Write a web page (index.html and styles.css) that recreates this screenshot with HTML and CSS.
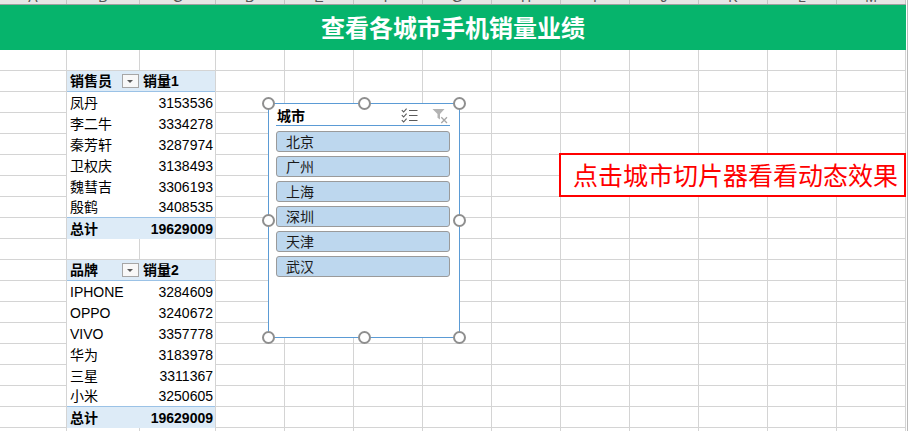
FILE: index.html
```html
<!DOCTYPE html>
<html lang="zh-CN">
<head>
<meta charset="utf-8">
<title>查看各城市手机销量业绩</title>
<link rel="stylesheet" href="styles.css">
</head>
<body>
<div class="page">
  <div class="colhead">
    <div class="ch a"><span>A</span></div>
    <div class="ch b"><span>B</span></div>
    <div class="ch c"><span>C</span></div>
    <div class="ch"><span>D</span></div>
    <div class="ch"><span>E</span></div>
    <div class="ch"><span>F</span></div>
    <div class="ch"><span>G</span></div>
    <div class="ch"><span>H</span></div>
    <div class="ch"><span>I</span></div>
    <div class="ch"><span>J</span></div>
    <div class="ch"><span>K</span></div>
    <div class="ch"><span>L</span></div>
    <div class="ch"><span>M</span></div>
  </div>
  <div class="title">查看各城市手机销量业绩</div>
  <div class="sheet">
    <div class="pivot">
      <div class="prow phead">
        <div class="c1">销售员<span class="dd"></span></div>
        <div class="c2h">销量1</div>
      </div>
      <div class="prow"><div class="c1">凤丹</div><div class="c2">3153536</div></div>
      <div class="prow"><div class="c1">李二牛</div><div class="c2">3334278</div></div>
      <div class="prow"><div class="c1">秦芳轩</div><div class="c2">3287974</div></div>
      <div class="prow"><div class="c1">卫权庆</div><div class="c2">3138493</div></div>
      <div class="prow"><div class="c1">魏彗吉</div><div class="c2">3306193</div></div>
      <div class="prow plast"><div class="c1">殷鹤</div><div class="c2">3408535</div></div>
      <div class="prow ptotal"><div class="c1">总计</div><div class="c2">19629009</div></div>
    </div>
    <div class="pivot">
      <div class="prow phead">
        <div class="c1">品牌<span class="dd"></span></div>
        <div class="c2h">销量2</div>
      </div>
      <div class="prow"><div class="c1">IPHONE</div><div class="c2">3284609</div></div>
      <div class="prow"><div class="c1">OPPO</div><div class="c2">3240672</div></div>
      <div class="prow"><div class="c1">VIVO</div><div class="c2">3357778</div></div>
      <div class="prow"><div class="c1">华为</div><div class="c2">3183978</div></div>
      <div class="prow"><div class="c1">三星</div><div class="c2">3311367</div></div>
      <div class="prow plast"><div class="c1">小米</div><div class="c2">3250605</div></div>
      <div class="prow ptotal"><div class="c1">总计</div><div class="c2">19629009</div></div>
    </div>

    <div class="slicer">
      <div class="s-head">
        <span class="s-title">城市</span>
        <svg class="ic-multi" width="17" height="15" viewBox="0 0 17 15">
          <g fill="none" stroke="#5a5a5a" stroke-width="1.1">
            <path d="M0.8 2.2 L2.6 4 L5.6 0.6"/>
            <path d="M0.8 7.2 L2.6 9 L5.6 5.6"/>
            <path d="M0.8 12.2 L2.6 14 L5.6 10.6"/>
            <path d="M8 2.5 H16.5 M8 7.5 H16.5 M8 12.5 H16.5"/>
          </g>
        </svg>
        <svg class="ic-clear" width="16" height="16" viewBox="0 0 16 16">
          <path d="M0.5 1 H12.5 L8 6 V11.5 L5.5 9.8 V6 Z" fill="#b3b3b3"/>
          <path d="M9.3 9.3 L15 15 M15 9.3 L9.3 15" stroke="#a6a6a6" stroke-width="1.3" fill="none"/>
        </svg>
      </div>
      <div class="s-items">
        <div class="s-btn">北京</div>
        <div class="s-btn">广州</div>
        <div class="s-btn">上海</div>
        <div class="s-btn">深圳</div>
        <div class="s-btn">天津</div>
        <div class="s-btn">武汉</div>
      </div>
      <span class="h h-tl"></span><span class="h h-tm"></span><span class="h h-tr"></span>
      <span class="h h-ml"></span><span class="h h-mr"></span>
      <span class="h h-bl"></span><span class="h h-bm"></span><span class="h h-br"></span>
    </div>

    <div class="note">点击城市切片器看看动态效果</div>
  </div>
</div>
</body>
</html>
```

FILE: styles.css
```css
html, body {
  margin: 0;
  padding: 0;
  background: #ffffff;
}
body {
  font-family: "Liberation Sans", "Noto Sans CJK SC", sans-serif;
  font-size: 14px;
  color: #000;
}
.page {
  width: 911px;
  height: 431px;
  overflow: hidden;
  position: relative;
  background:
    linear-gradient(to right, transparent 907px, #b9b9b9 907px 908px, transparent 908px);
}

/* column header strip */
.colhead {
  display: flex;
  height: 4px;
  border-bottom: 1px solid #a0a0a0;
  background: #e6e6e6;
  overflow: hidden;
  width: 906px;
}
.ch {
  width: 68px;
  border-right: 1px solid #c4c4c4;
  text-align: center;
  color: #555;
  font-size: 14px;
}
.ch.a { width: 66px; }
.ch.b { width: 72px; }
.ch.c { width: 75px; }
.ch span {
  display: block;
  margin-top: -10px;
  line-height: 14px;
}

/* title band */
.title {
  width: 906px;
  height: 45px;
  background: #06b46c;
  color: #ffffff;
  font-family: "Noto Sans CJK SC", sans-serif;
  font-weight: 700;
  font-size: 24px;
  line-height: 43px;
  text-align: center;
}

/* sheet grid */
.sheet {
  position: relative;
  height: 381px;
  width: 906px;
  padding-top: 21px;
  box-sizing: border-box;
  background-image:
    linear-gradient(to right,
      transparent 66px, #d4d4d4 66px 67px,
      transparent 67px 139px, #d4d4d4 139px 140px,
      transparent 140px 215px, #d4d4d4 215px 216px,
      transparent 216px 284px, #d4d4d4 284px 285px,
      transparent 285px 353px, #d4d4d4 353px 354px,
      transparent 354px 422px, #d4d4d4 422px 423px,
      transparent 423px 491px, #d4d4d4 491px 492px,
      transparent 492px 560px, #d4d4d4 560px 561px,
      transparent 561px 629px, #d4d4d4 629px 630px,
      transparent 630px 698px, #d4d4d4 698px 699px,
      transparent 699px 767px, #d4d4d4 767px 768px,
      transparent 768px 836px, #d4d4d4 836px 837px,
      transparent 837px 905px, #d4d4d4 905px 906px),
    repeating-linear-gradient(to bottom, transparent 0 20px, #d4d4d4 20px 21px);
}

/* pivot tables */
.pivot {
  margin-left: 67px;
  width: 148px;
  background: #ffffff;
  margin-bottom: 21px;
}
.prow {
  display: flex;
  align-items: center;
  height: 21px;
  box-sizing: border-box;
  line-height: 20px;
  white-space: nowrap;
}
.c1 {
  width: 72px;
  padding-left: 3px;
  box-sizing: border-box;
  display: flex;
  align-items: center;
}
.c2 {
  flex: 1;
  text-align: right;
  padding-right: 2px;
}
.c2h {
  flex: 1;
  padding-left: 4px;
}
.phead {
  background: #ddebf7;
  border-bottom: 1px solid #9bc2e6;
  font-weight: 700;
}
.plast {
  border-bottom: 1px solid #9bc2e6;
}
.ptotal {
  background: #ddebf7;
  font-weight: 700;
}
.dd {
  margin-left: auto;
  width: 15px;
  height: 12px;
  border: 1px solid #a6a6a6;
  background: #f8f8f8;
  position: relative;
}
.dd::after {
  content: "";
  position: absolute;
  left: 4px;
  top: 5px;
  border-left: 3.5px solid transparent;
  border-right: 3.5px solid transparent;
  border-top: 3.5px solid #595959;
}

/* slicer */
.slicer {
  position: absolute;
  left: 268px;
  top: 53px;
  width: 192px;
  height: 235px;
  box-sizing: border-box;
  border: 1px solid #5b9bd5;
  background: #ffffff;
  padding: 0 9px 0 7px;
  font-family: "Noto Sans CJK SC", sans-serif;
}
.s-head {
  display: flex;
  align-items: center;
  height: 22px;
  box-sizing: border-box;
  border-bottom: 1px solid #5b9bd5;
  padding: 1px 2px 0 1px;
}
.s-title {
  font-weight: 700;
  font-size: 14px;
  color: #000;
  margin-right: auto;
}
.ic-multi {
  display: block;
  margin-right: 14px;
}
.ic-clear {
  display: block;
  margin-top: 2px;
}
.s-items {
  display: flex;
  flex-direction: column;
  gap: 4px;
  padding-top: 5px;
}
.s-btn {
  height: 21px;
  box-sizing: border-box;
  border: 1px solid #9a9a9a;
  border-radius: 3px;
  background: #bdd7ee;
  padding-left: 9px;
  font-size: 14px;
  line-height: 18px;
  color: #1a1a1a;
}
.h {
  position: absolute;
  width: 9px;
  height: 9px;
  border: 2px solid #8f8f8f;
  border-radius: 50%;
  background: #ffffff;
}
.h-tl { left: -7px; top: -7px; }
.h-tm { left: 88.5px; top: -7px; }
.h-tr { right: -7px; top: -7px; }
.h-ml { left: -7px; top: 109.5px; }
.h-mr { right: -7px; top: 109.5px; }
.h-bl { left: -7px; bottom: -7px; }
.h-bm { left: 88.5px; bottom: -7px; }
.h-br { right: -7px; bottom: -7px; }

/* note box */
.note {
  position: absolute;
  left: 559px;
  top: 103px;
  width: 347px;
  height: 44px;
  box-sizing: border-box;
  border: 2px solid #ff0000;
  background: #ffffff;
  color: #ff0000;
  font-family: "Noto Sans CJK SC", sans-serif;
  font-size: 25px;
  line-height: 38px;
  padding-left: 12px;
  white-space: nowrap;
}
```
